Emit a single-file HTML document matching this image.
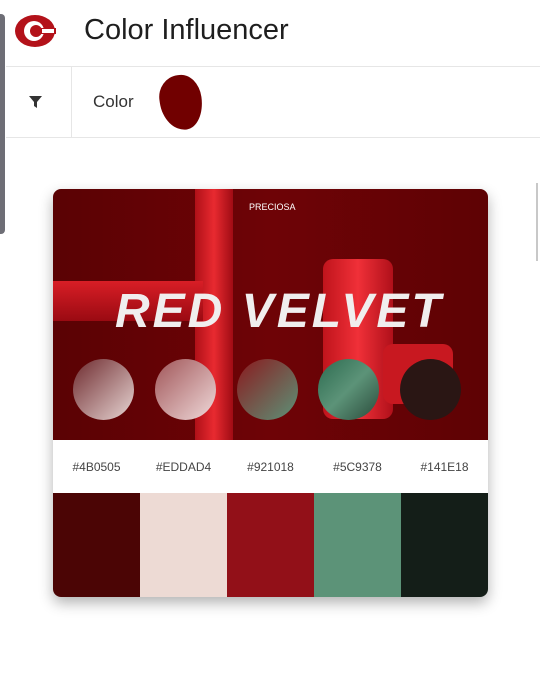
<!DOCTYPE html>
<html><head><meta charset="utf-8"><style>
*{margin:0;padding:0;box-sizing:border-box}
body{width:540px;height:675px;background:#fff;font-family:"Liberation Sans",Roboto,sans-serif;position:relative;overflow:hidden}
.abs{position:absolute}
</style></head><body>
<div class="abs" style="left:0;top:14px;width:5px;height:220px;background:#6e6e76;border-radius:0 4px 4px 0"></div>
<div class="abs" style="left:536px;top:183px;width:2px;height:78px;background:#c8c8c8"></div>
<svg class="abs" style="left:14px;top:13px" width="44" height="36" viewBox="0 0 44 36">
<ellipse cx="21" cy="18" rx="20" ry="16" fill="#b3121a"/>
<circle cx="20" cy="18" r="10" fill="#fff"/>
<circle cx="22" cy="18" r="6" fill="#b3121a"/>
<rect x="24" y="15" width="18" height="6" fill="#b3121a"/>
<rect x="28" y="16" width="12" height="4" fill="#fff"/>
</svg>
<div class="abs" style="left:84px;top:14px;font-size:29px;color:#1e1e1e">Color Influencer</div>
<div class="abs" style="left:6px;top:66px;width:534px;height:1px;background:#e6e6e6"></div>
<div class="abs" style="left:6px;top:137px;width:534px;height:1px;background:#e6e6e6"></div>
<div class="abs" style="left:71px;top:67px;width:1px;height:70px;background:#e6e6e6"></div>
<svg class="abs" style="left:29px;top:96px" width="13" height="12" viewBox="0 0 13 12"><path d="M0 0H13L8 6V12L5 10V6Z" fill="#333"/></svg>
<div class="abs" style="left:93px;top:92px;font-size:17px;color:#333">Color</div>
<div class="abs" style="left:160px;top:75px;width:42px;height:55px;background:#710000;border-radius:50% 45% 45% 55%/40% 45% 55% 55%;transform:rotate(-8deg)"></div>
<div class="abs" style="left:53px;top:189px;width:435px;height:408px;border-radius:8px;overflow:hidden;box-shadow:0 6px 14px rgba(0,0,0,.3)">
 <div class="abs" style="left:0;top:0;width:435px;height:251px;background:linear-gradient(90deg,#5a0204,#6e0306 50%,#5e0204)">
  <div class="abs" style="left:142px;top:0;width:38px;height:251px;background:linear-gradient(90deg,#b01018,#e82a30,#a00c14)"></div>
  <div class="abs" style="left:0;top:92px;width:150px;height:40px;background:linear-gradient(#d81e26,#9a0a12)"></div>
  <div class="abs" style="left:270px;top:70px;width:70px;height:160px;background:linear-gradient(90deg,#c0141c,#f03038,#b0101a);border-radius:10px"></div>
  <div class="abs" style="left:330px;top:155px;width:70px;height:60px;background:#c81820;border-radius:10px"></div>
  <div class="abs" style="left:196px;top:13px;font-size:9px;color:#fff">PRECIOSA</div>
  <div class="abs" style="left:62px;top:95px;font-size:48px;font-weight:bold;font-style:italic;color:#f0eeee;letter-spacing:3px">RED VELVET</div>
  <div class="abs" style="left:20px;top:170px;width:61px;height:61px;border-radius:50%;background:linear-gradient(135deg,#6e2a2e,#e8d6d4)"></div>
  <div class="abs" style="left:102px;top:170px;width:61px;height:61px;border-radius:50%;background:linear-gradient(135deg,#a05558,#f0dada)"></div>
  <div class="abs" style="left:184px;top:170px;width:61px;height:61px;border-radius:50%;background:linear-gradient(135deg,#8a1a1e,#5c9378)"></div>
  <div class="abs" style="left:265px;top:170px;width:61px;height:61px;border-radius:50%;background:linear-gradient(135deg,#2c6b50,#5c9378 50%,#2a4a3a)"></div>
  <div class="abs" style="left:347px;top:170px;width:61px;height:61px;border-radius:50%;background:#2a1614"></div>
 </div>
 <div class="abs" style="left:0;top:251px;width:435px;height:53px;background:#fff;display:flex;font-size:12px;color:#444;align-items:center">
  <div style="width:87px;text-align:center">#4B0505</div><div style="width:87px;text-align:center">#EDDAD4</div><div style="width:87px;text-align:center">#921018</div><div style="width:87px;text-align:center">#5C9378</div><div style="width:87px;text-align:center">#141E18</div>
 </div>
 <div class="abs" style="left:0;top:304px;width:435px;height:104px;display:flex">
  <div style="width:87px;background:#4b0505"></div><div style="width:87px;background:#eddad4"></div><div style="width:87px;background:#921018"></div><div style="width:87px;background:#5c9378"></div><div style="width:87px;background:#141e18"></div>
 </div>
</div>
</body></html>
